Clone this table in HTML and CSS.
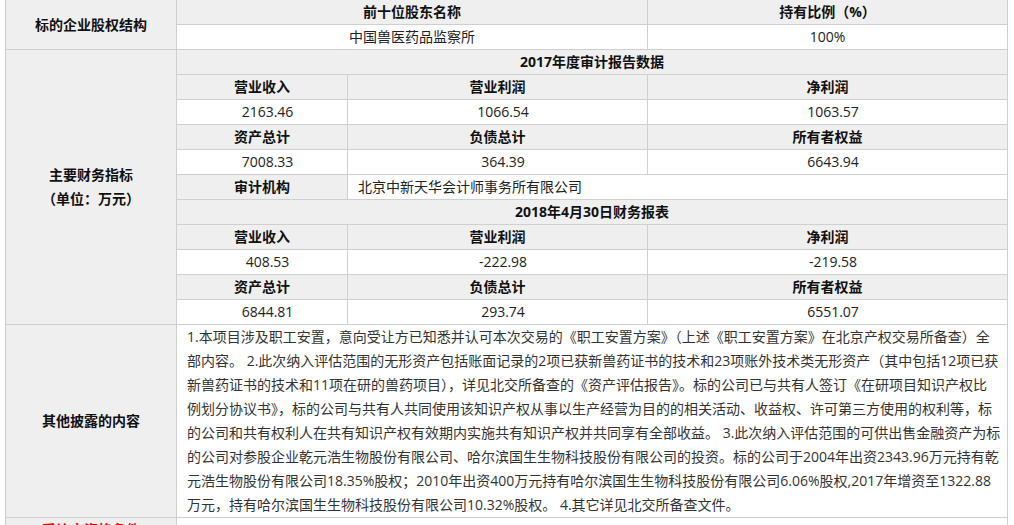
FILE: index.html
```html
<!DOCTYPE html>
<html lang="zh-CN">
<head>
<meta charset="utf-8">
<title>标的企业信息</title>
<link rel="stylesheet" href="styles.css">
</head>
<body>
<table class="info">
  <colgroup>
    <col class="c-label">
    <col class="c-a">
    <col class="c-b">
    <col class="c-c">
  </colgroup>
  <tbody>
    <tr>
      <th class="label" rowspan="2">标的企业股权结构</th>
      <th class="head" colspan="2">前十位股东名称</th>
      <th class="head">持有比例（%）</th>
    </tr>
    <tr>
      <td class="val" colspan="2">中国兽医药品监察所</td>
      <td class="val">100%</td>
    </tr>
    <tr>
      <th class="label" rowspan="11">主要财务指标<br>（单位：万元）</th>
      <th class="head" colspan="3">2017年度审计报告数据</th>
    </tr>
    <tr>
      <th class="head">营业收入</th>
      <th class="head">营业利润</th>
      <th class="head">净利润</th>
    </tr>
    <tr>
      <td class="val num">2163.46</td>
      <td class="val num">1066.54</td>
      <td class="val num">1063.57</td>
    </tr>
    <tr>
      <th class="head">资产总计</th>
      <th class="head">负债总计</th>
      <th class="head">所有者权益</th>
    </tr>
    <tr>
      <td class="val num">7008.33</td>
      <td class="val num">364.39</td>
      <td class="val num">6643.94</td>
    </tr>
    <tr>
      <th class="head">审计机构</th>
      <td class="val left" colspan="2">北京中新天华会计师事务所有限公司</td>
    </tr>
    <tr>
      <th class="head" colspan="3">2018年4月30日财务报表</th>
    </tr>
    <tr>
      <th class="head">营业收入</th>
      <th class="head">营业利润</th>
      <th class="head">净利润</th>
    </tr>
    <tr>
      <td class="val num">408.53</td>
      <td class="val num">-222.98</td>
      <td class="val num">-219.58</td>
    </tr>
    <tr>
      <th class="head">资产总计</th>
      <th class="head">负债总计</th>
      <th class="head">所有者权益</th>
    </tr>
    <tr>
      <td class="val num">6844.81</td>
      <td class="val num">293.74</td>
      <td class="val num">6551.07</td>
    </tr>
    <tr>
      <th class="label">其他披露的内容</th>
      <td class="para" colspan="3">1.本项目涉及职工安置，意向受让方已知悉并认可本次交易的《职工安置方案》（上述《职工安置方案》在北京产权交易所备查）全<br>部内容。 2.此次纳入评估范围的无形资产包括账面记录的2项已获新兽药证书的技术和23项账外技术类无形资产（其中包括12项已获<br>新兽药证书的技术和11项在研的兽药项目），详见北交所备查的《资产评估报告》。标的公司已与共有人签订《在研项目知识产权比<br>例划分协议书》，标的公司与共有人共同使用该知识产权从事以生产经营为目的的相关活动、收益权、许可第三方使用的权利等，标<br>的公司和共有权利人在共有知识产权有效期内实施共有知识产权并共同享有全部收益。 3.此次纳入评估范围的可供出售金融资产为标<br>的公司对参股企业乾元浩生物股份有限公司、哈尔滨国生生物科技股份有限公司的投资。标的公司于2004年出资2343.96万元持有乾<br>元浩生物股份有限公司18.35%股权；2010年出资400万元持有哈尔滨国生生物科技股份有限公司6.06%股权,2017年增资至1322.88<br>万元，持有哈尔滨国生生物科技股份有限公司10.32%股权。 4.其它详见北交所备查文件。</td>
    </tr>
    <tr>
      <th class="label red">受让方资格条件</th>
      <td class="para" colspan="3"></td>
    </tr>
  </tbody>
</table>
</body>
</html>
```

FILE: styles.css
```css
html, body {
  margin: 0;
  padding: 0;
  background: #fff;
  overflow: hidden;
}

body {
  font-family: "Open Sans", "Noto Sans CJK SC", sans-serif;
  font-size: 14px;
  color: #222;
}

.info {
  margin: -1px 0 0 5px;
  width: 1003px;
  table-layout: fixed;
  border-collapse: collapse;
}

.c-label { width: 171px; }
.c-a { width: 171px; }
.c-b { width: 300px; }
.c-c { width: 360px; }

.info th,
.info td {
  border: 1px solid #cfcfcf;
  padding: 0;
  height: 24px;
  line-height: 24px;
  text-align: center;
  vertical-align: middle;
  white-space: nowrap;
  overflow: hidden;
}

.label {
  background: #efefef;
  font-weight: 700;
  color: #111;
}

.head {
  background: #efefef;
  font-weight: 700;
  color: #111;
}

.val {
  background: #fff;
  font-weight: 400;
}

.num {
  padding-left: 11px !important;
}

.left {
  text-align: left !important;
  padding-left: 10px !important;
}

.para {
  background: #fff;
  text-align: left !important;
  padding: 0 6px 0 10px !important;
  color: #333;
}

.red {
  color: #e60000;
  vertical-align: top !important;
}
```
